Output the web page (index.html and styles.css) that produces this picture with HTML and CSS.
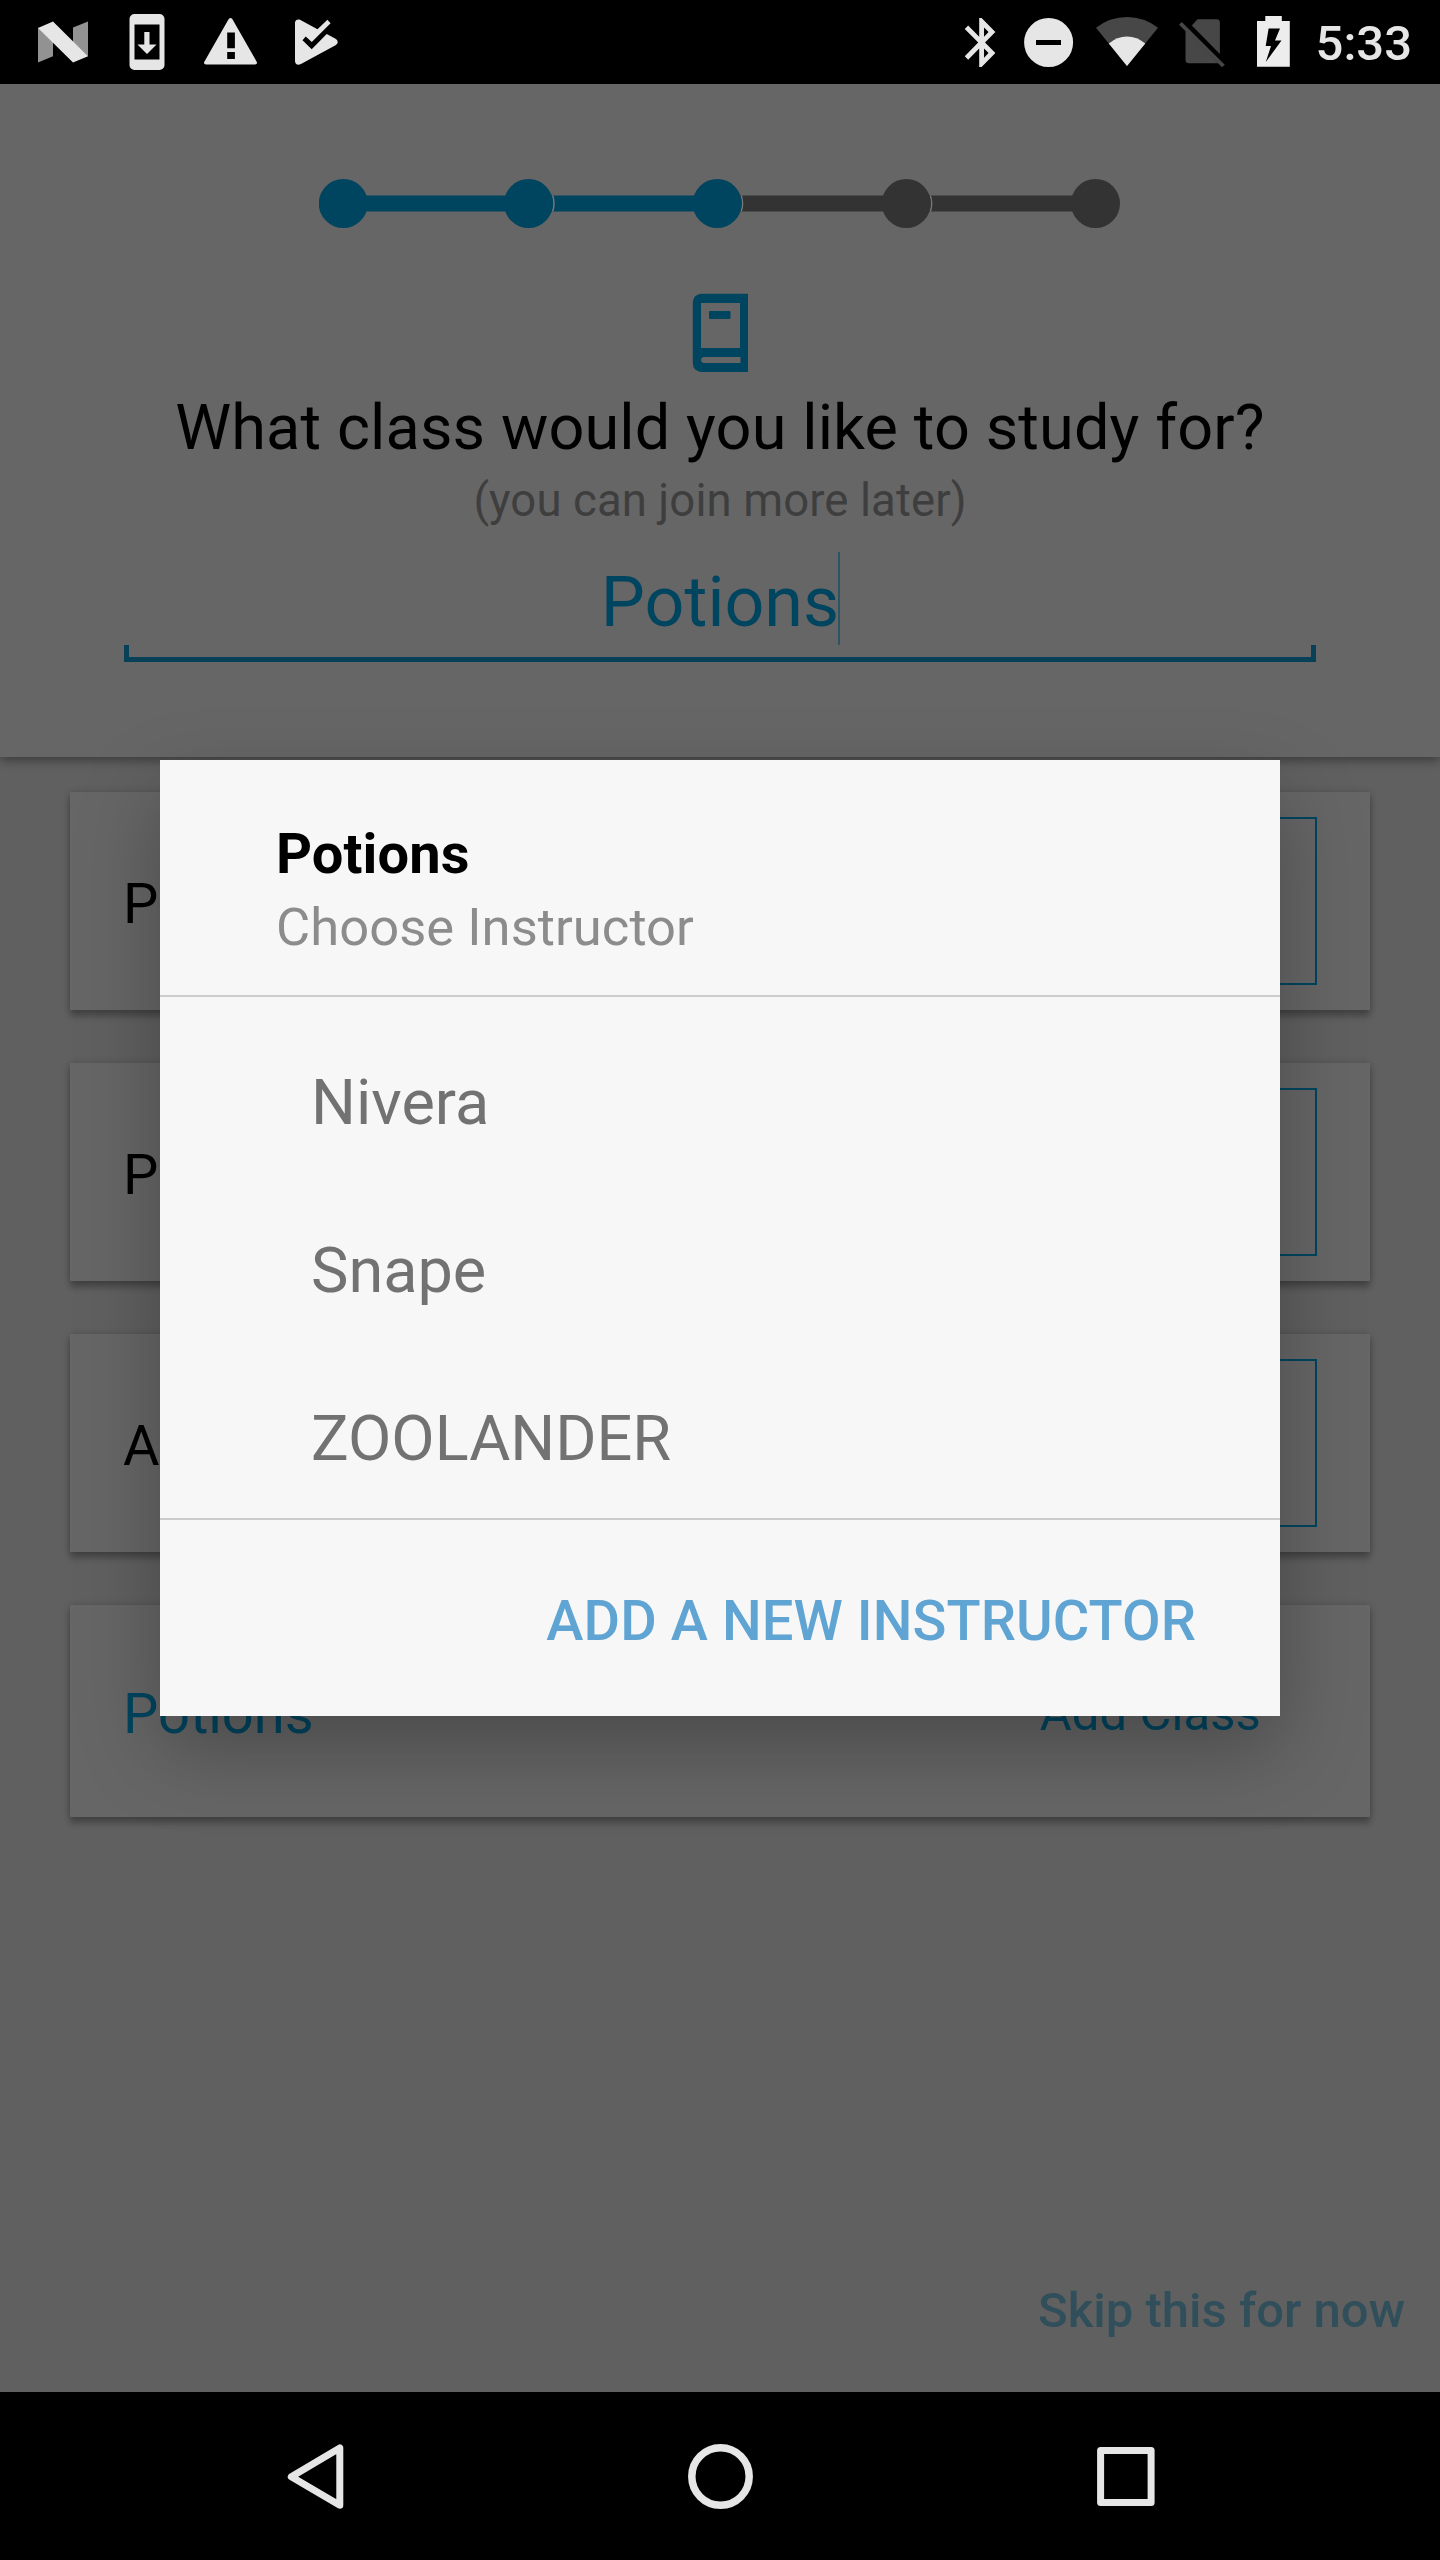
FILE: index.html
```html
<!DOCTYPE html>
<html lang="en">
<head>
<meta charset="utf-8">
<title>Choose Instructor</title>
<link rel="stylesheet" href="styles.css">
</head>
<body>
<div class="screen">
  <header class="status-bar">
    <div class="status-group">
      <svg class="status-icon" width="90" height="84" viewBox="38 0 90 84">
        <path fill="#929292" d="M38 27.5V62.5L53 56.3V40zM88 21.5V56.5L73 42V27.5z"/>
        <path fill="#e6e6e6" d="M38 28L53 21.5 88 56.3 73 62.5z"/>
      </svg>
      <svg class="status-icon" width="75" height="84" viewBox="128 0 75 84">
        <path fill="#e6e6e6" fill-rule="evenodd" d="M134.500 14h25a5 5 0 0 1 5 5v46a5 5 0 0 1-5 5h-25a5 5 0 0 1-5-5V19a5 5 0 0 1 5-5zM134.500 24.600v35h25v-35zM144.300 32h5.200v12.600h7L147 54l-9.500-9.400h6.800z"/>
      </svg>
      <svg class="status-icon" width="91" height="84" viewBox="203 0 91 84">
        <path fill="#e6e6e6" fill-rule="evenodd" d="M228.700 19q1.800-2 3.600 0L256.800 62q.8 2.500-1.800 2.500H206q-2.600 0-1.800-2.500zM227.200 32.500V48.200h7.700V32.500zM227.200 52v7h7.700v-7z"/>
      </svg>
      <svg class="status-icon" width="50" height="84" viewBox="294 0 50 84">
        <path fill="#e6e6e6" d="M295 22.500q.5-3.500 4.500-3L317.500 29.300 327.400 19.800 330.600 23.200 311.800 42 305.700 36.500 302.500 40.200 311.700 49.200 326.700 34 336 39q3.500 3 0 6L300.500 64.300q-5 1.500-5.500-3z"/>
      </svg>
    </div>
    <div class="status-group">
      <svg class="status-icon" width="60" height="84" viewBox="963 0 60 84">
        <path fill="#e6e6e6" transform="translate(952.700 13.200) scale(2.410 2.450)" d="M17.710 7.710L12 2h-1v7.590L6.410 5 5 6.410 10.590 12 5 17.590 6.410 19 11 14.410V22h1l5.710-5.710-4.300-4.290 4.300-4.290zM13 5.830l1.880 1.880L13 9.590V5.830zm1.880 10.460L13 18.170v-3.760l1.880 1.880z"/>
      </svg>
      <svg class="status-icon" width="72" height="84" viewBox="1023 0 72 84">
        <path fill="#e6e6e6" fill-rule="evenodd" d="M1024.100 42.500a24.500 24.500 0 1 1 49 0a24.500 24.500 0 1 1-49 0zM1036 40v5h25v-5z"/>
      </svg>
      <svg class="status-icon" width="83" height="84" viewBox="1095 0 83 84">
        <path fill="#474747" d="M1127 66L1096 27.700Q1110 17 1127 17T1158 27.700z"/>
        <path fill="#e6e6e6" d="M1127 66L1108.800 43.500Q1117 36.500 1127 36.500T1145.300 43.500z"/>
      </svg>
      <svg class="status-icon" width="77" height="84" viewBox="1178 0 77 84">
        <path fill="#474747" d="M1197.500 19.300H1216.500q3.400 0 3.400 3.400V54L1191.800 25.500zM1185.500 30.500L1218.500 63.300H1189q-3.500 0-3.500-3.500z"/>
        <path stroke="#474747" stroke-width="3.800" d="M1180.400 23.300L1223.400 66"/>
      </svg>
      <svg class="status-icon" width="60" height="84" viewBox="1255 0 60 84">
        <path fill="#ededed" fill-rule="evenodd" d="M1265.300 16h16.500v5h8v45.800h-32.800V21h8.300zM1268.600 28.500L1265.700 46H1271L1265.800 62 1281.500 40.500H1275L1280 28.500z"/>
      </svg>
      <span class="clock">5:33</span>
    </div>
  </header>

  <section class="question">
    <svg class="stepper" width="802" height="50" viewBox="319 179 802 50">
      <path fill="#00455f" d="M343 195.400H718V211.600H343z"/>
      <path fill="#333" d="M718 195.400H1096V211.600H718z"/>
      <g fill="none" stroke="#777" stroke-width="1.500">
        <path d="M552.600 195.400a25.300 25.300 0 0 1 0 16.200M741.200 195.400a25.300 25.300 0 0 1 0 16.200M930.300 195.400a25.300 25.300 0 0 1 0 16.200"/>
      </g>
      <g fill="#00455f">
        <circle cx="343.300" cy="203.500" r="24.500"/>
        <circle cx="528.500" cy="203.500" r="24.500"/>
        <circle cx="717.200" cy="203.500" r="24.500"/>
      </g>
      <g fill="#333">
        <circle cx="906.300" cy="203.500" r="24.500"/>
        <circle cx="1095.500" cy="203.500" r="24.500"/>
      </g>
    </svg>
    <svg class="book" width="56" height="79" viewBox="692 293 56 79">
      <path fill="#00455f" fill-rule="evenodd" d="M701 293.700H748V372H701q-8-1-8.200-9V302.700q.2-8 8.200-9zM701 303V348H740V303zM703.500 357q-2.500.5-2.500 3t2.500 3H740.500V357zM710 311h19.500q1 0 1 1v6q0 1-1 1H710q-1 0-1-1v-6q0-1 1-1z"/>
    </svg>
    <h1 class="title">What class would you like to study for?</h1>
    <p class="hint">(you can join more later)</p>
    <div class="field">
      <div class="field-value">Potions<i class="caret"></i></div>
      <div class="field-line"></div>
    </div>
  </section>

  <main class="results">
    <div class="card"><span class="class-name">P</span><span class="join"></span></div>
    <div class="card"><span class="class-name">P</span><span class="join"></span></div>
    <div class="card"><span class="class-name">A</span><span class="join"></span></div>
    <div class="card card-new"><span class="class-name">Potions</span><span class="add">Add Class</span></div>
    <a class="skip">Skip this for now</a>
  </main>

  <nav class="nav-bar">
    <svg width="1440" height="168" viewBox="0 0 1440 168" fill="none" stroke="#e6e6e6" stroke-width="7" stroke-linejoin="round">
      <path d="M291.300 84.700L339.800 55.900V113.300z"/>
      <circle cx="720.500" cy="84.500" r="28.700" stroke-width="7.500"/>
      <rect x="1100.600" y="58.600" width="50.500" height="51.800"/>
    </svg>
  </nav>

  <div class="dialog">
    <div class="dialog-head">
      <h2 class="dialog-title">Potions</h2>
      <p class="dialog-sub">Choose Instructor</p>
    </div>
    <ul class="instructors">
      <li>Nivera</li>
      <li>Snape</li>
      <li>ZOOLANDER</li>
    </ul>
    <div class="dialog-foot"><span class="new-instructor">ADD A NEW INSTRUCTOR</span></div>
  </div>
</div>
</body>
</html>
```
FILE: styles.css
```css
* { box-sizing: border-box; margin: 0; padding: 0; }
body { font-family: Roboto, "Noto Sans", sans-serif; background: #000; }
svg { display: block; }

.screen {
  position: relative;
  display: flex;
  flex-direction: column;
  width: 1440px;
  height: 2560px;
  overflow: hidden;
  background: #606060;
}

.status-bar {
  display: flex;
  justify-content: space-between;
  height: 84px;
  padding: 0 28px 0 38px;
  background: #000;
}
.status-group { display: flex; }
.status-icon { flex: none; }
.clock {
  margin-left: 1px;
  color: #e6e6e6;
  font-size: 49px;
  font-weight: 500;
  line-height: 88px;
}

.question {
  z-index: 1;
  display: flex;
  flex-direction: column;
  align-items: center;
  height: 673px;
  padding-top: 95px;
  background: #666;
  box-shadow: 0 4px 9px rgba(0, 0, 0, .35);
}
.book { margin-top: 64px; }
.title {
  margin-top: 18px;
  color: #000;
  font-size: 63px;
  font-weight: 400;
  letter-spacing: .12px;
  line-height: 76px;
}
.hint {
  margin-top: 7px;
  color: #3e3e3e;
  font-size: 45.5px;
  letter-spacing: .1px;
  line-height: 56px;
}
.field { width: 1192px; margin-top: 23px; }
.field-value {
  position: relative;
  width: max-content;
  height: 93px;
  margin: 0 auto;
  color: #00455f;
  font-size: 70px;
  line-height: 100px;
}
.caret {
  position: absolute;
  top: 0;
  right: -1px;
  width: 2px;
  height: 93px;
  background: #2c5464;
}
.field-line {
  height: 17px;
  border: solid #084157;
  border-width: 0 5px 5px;
}

.results {
  display: flex;
  flex: 1;
  flex-direction: column;
  gap: 53px;
  padding: 35px 70px 0;
}
.card {
  display: flex;
  flex: none;
  align-items: center;
  justify-content: space-between;
  height: 218px;
  padding: 0 53px;
  background: #666;
  box-shadow: 0 7px 6px rgba(0, 0, 0, .2), 0 1px 7px rgba(0, 0, 0, .24);
}
.class-name {
  padding-top: 6px;
  color: #000;
  font-size: 56px;
}
.join {
  width: 300px;
  height: 168px;
  border: 2px solid #00455f;
}
.card-new { height: 212px; }
.card-new .class-name { color: #00455f; }
.add {
  padding: 5px 56px 0 0;
  color: #00455f;
  font-size: 49px;
  letter-spacing: .1px;
}
.skip {
  align-self: flex-end;
  margin: auto -35px 53px 0;
  color: #304f5b;
  font-size: 49px;
  font-weight: 500;
  line-height: 56px;
}

.nav-bar { flex: none; height: 168px; background: #000; }

.dialog {
  position: absolute;
  z-index: 2;
  top: 760px;
  left: 160px;
  width: 1120px;
  height: 956px;
  background: #f7f7f7;
  box-shadow: 0 34px 76px rgba(0, 0, 0, .27);
}
.dialog-head {
  height: 237px;
  padding: 58px 116px 0;
  border-bottom: 2px solid #ccc;
}
.dialog-title { color: #000; font-size: 56px; font-weight: 700; letter-spacing: .1px; line-height: 72px; }
.dialog-sub { color: #8c8c8c; font-size: 52.5px; letter-spacing: .05px; line-height: 74px; }
.instructors {
  height: 523px;
  padding: 22px 151px 0;
  border-bottom: 2px solid #ccc;
  list-style: none;
}
.instructors li { height: 168px; color: #727272; font-size: 63px; line-height: 168px; }
.instructors li:last-child { height: 163px; }
.dialog-foot {
  display: flex;
  justify-content: flex-end;
  padding-right: 84px;
}
.new-instructor {
  height: 196px;
  color: #5fa4d2;
  font-size: 56px;
  font-weight: 500;
  letter-spacing: .07px;
  line-height: 202px;
}
```
